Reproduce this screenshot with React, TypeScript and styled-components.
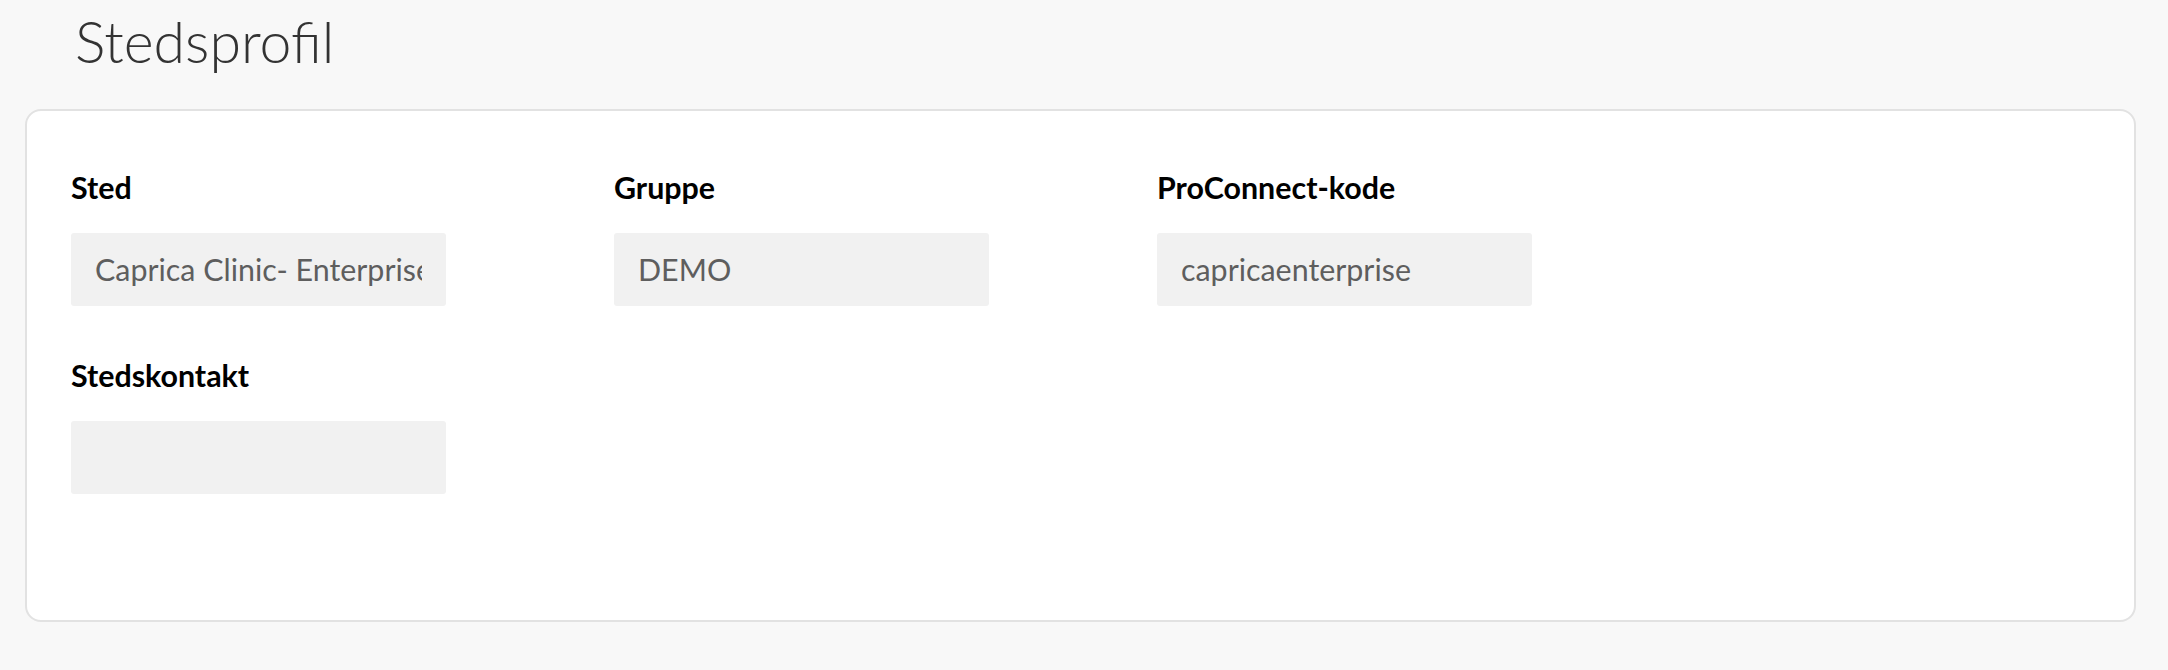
import React from "react";
import styled, { createGlobalStyle } from "styled-components";

const GlobalStyle = createGlobalStyle`
  html, body {
    margin: 0;
    padding: 0;
    background: #f8f8f8;
    font-family: Lato, "Open Sans", sans-serif;
  }
`;

const Page = styled.div`
  padding: 7px 32px 40px 25px;
`;

const Title = styled.h1`
  margin: 0 0 33px 50px;
  font-family: Lato, sans-serif;
  font-weight: 300;
  font-size: 57.2px;
  line-height: 1.2;
  color: #333333;
`;

const Card = styled.section`
  background: #ffffff;
  border: 2px solid #e2e2e2;
  border-radius: 16px;
  min-height: 513px;
  box-sizing: border-box;
  padding: 58px 44px 0 44px;
`;

const FieldGrid = styled.div`
  display: grid;
  grid-template-columns: repeat(3, 375px);
  column-gap: 168px;
  row-gap: 51px;
`;

const Field = styled.div`
  display: flex;
  flex-direction: column;
  gap: 28px;
`;

const Label = styled.label`
  font-family: Lato, sans-serif;
  font-weight: 700;
  font-size: 30.4px;
  line-height: 36px;
  color: #000000;
`;

const Input = styled.input`
  box-sizing: border-box;
  width: 375px;
  height: 73px;
  padding: 0 24px;
  border: none;
  border-radius: 3px;
  background: #f1f1f1;
  font-family: Lato, sans-serif;
  font-size: 30.4px;
  color: #5e5e5e;
  outline: none;
`;

const fields = [
  { label: "Sted", value: "Caprica Clinic- Enterprise" },
  { label: "Gruppe", value: "DEMO" },
  { label: "ProConnect-kode", value: "capricaenterprise" },
  { label: "Stedskontakt", value: "" },
];

export default function App() {
  return (
    <>
      <GlobalStyle />
      <Page>
        <Title>Stedsprofil</Title>
        <Card>
          <FieldGrid>
            {fields.map((f) => (
              <Field key={f.label}>
                <Label>{f.label}</Label>
                <Input readOnly value={f.value} />
              </Field>
            ))}
          </FieldGrid>
        </Card>
      </Page>
    </>
  );
}
